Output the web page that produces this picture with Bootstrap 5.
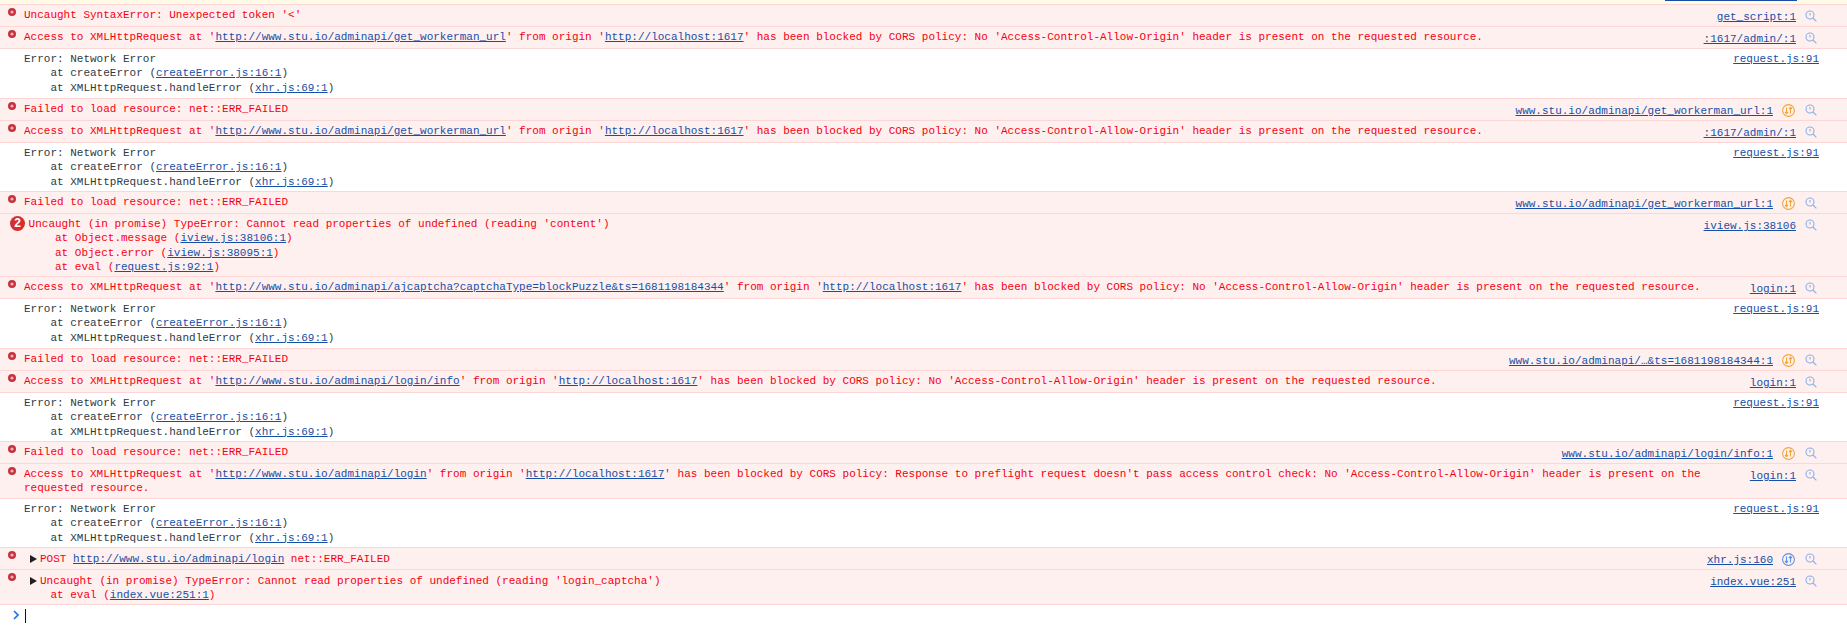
<!DOCTYPE html>
<html lang="en"><head><meta charset="utf-8"><title>Console</title>
<link rel="stylesheet" href="https://cdn.jsdelivr.net/npm/bootstrap@5.3.0/dist/css/bootstrap.min.css">
<style>
body{background:#fff;font:11px/14.33px "Liberation Mono",monospace;overflow:hidden;color:#303942;height:642px}
a{color:#174ea6;text-decoration:underline}
.top-strip{height:5px;background:#fffbe6;border-bottom:1px solid #fdd5d5;overflow:hidden;padding-right:50px}
.top-strip a{display:block;width:132px;height:1px;background:#174ea6}
.con-row{border-bottom:1px solid #fdd5d5;padding:3px 0 0 24px;position:relative;color:#303942}
.is-err{background:#fff0f0;color:#f5000f}
.is-err .src{padding-right:51px}
.is-err .src a{margin-top:2px}
.h1l{height:22px}.h2l{height:35px}.h3l{height:50px}.h3s{height:49px}.h4l{height:63px}
.msg{min-width:0}
.msg-shift{margin-top:1px}
.msg-line{white-space:pre}
.pad-group{padding-left:28.6px}
.src{white-space:nowrap;padding-right:28px;margin-left:25px}
.ico{position:absolute;right:30px;top:5px}
.net{position:absolute;right:52px;top:5px}
.err-dot{position:absolute;left:8px;top:3px}
.group-n{position:absolute;left:10px;top:2px;width:15px;height:15px;border-radius:50%;background:#d32f2f;color:#fff;font:bold 12px/15px "Liberation Sans",sans-serif;text-align:center}
.with-net{padding-right:74px!important}
.tri{display:inline-block;width:0;height:0;border-left:7px solid #202124;border-top:4.5px solid transparent;border-bottom:4.5px solid transparent;margin:0 3px 0 6px;vertical-align:-1px}
.prompt{height:30px;padding:4px 0 0 12px;gap:5px}
.prompt svg{margin-top:1px}
.caret-line{width:1px;height:14px;background:#111}
</style></head><body>
<div class="top-strip d-flex justify-content-end"><a href="#"></a></div>
<div id="log"></div>
<div class="prompt d-flex align-items-start"><svg width="8" height="10" viewBox="0 0 8 10"><path d="M2 1l4 4-4 4" fill="none" stroke="#1a73e8" stroke-width="1.7"/></svg><span class="caret-line"></span></div>
<script>
var u='http://www.stu.io/adminapi/';
function L(h){return '<a href="#">'+h+'</a>'}
var cors=function(a,c){return "Access to XMLHttpRequest at '"+L(a)+"' from origin '"+L('http://localhost:1617')+"' has been blocked by CORS policy: "+(c||"No 'Access-Control-Allow-Origin' header is present on the requested resource.")};
var net="Error: Network Error\n    at createError ("+L('createError.js:16:1')+")\n    at XMLHttpRequest.handleError ("+L('xhr.js:69:1')+")";
var fail="Failed to load resource: net::ERR_FAILED";
var rows=[
['e',"Uncaught SyntaxError: Unexpected token '&lt;'",'get_script:1',0,'h1l'],
['e',cors(u+'get_workerman_url'),':1617/admin/:1',0,'h1l'],
['w',net,'request.js:91',0,'h3l'],
['e',fail,'www.stu.io/adminapi/get_workerman_url:1','o','h1l'],
['e',cors(u+'get_workerman_url'),':1617/admin/:1',0,'h1l'],
['w',net,'request.js:91',0,'h3s'],
['e',fail,'www.stu.io/adminapi/get_workerman_url:1','o','h1l'],
['g',"Uncaught (in promise) TypeError: Cannot read properties of undefined (reading 'content')\n    at Object.message ("+L('iview.js:38106:1')+")\n    at Object.error ("+L('iview.js:38095:1')+")\n    at eval ("+L('request.js:92:1')+")",'iview.js:38106',0,'h4l'],
['e',cors(u+'ajcaptcha?captchaType=blockPuzzle&amp;ts=1681198184344'),'login:1',0,'h1l'],
['w',net,'request.js:91',0,'h3l'],
['e',fail,'www.stu.io/adminapi/…&amp;ts=1681198184344:1','o','h1l'],
['e',cors(u+'login/info'),'login:1',0,'h1l'],
['w',net,'request.js:91',0,'h3s'],
['e',fail,'www.stu.io/adminapi/login/info:1','o','h1l'],
['e',cors(u+'login',"Response to preflight request doesn't pass access control check: No 'Access-Control-Allow-Origin' header is present on the\nrequested resource."),'login:1',0,'h2l'],
['w',net,'request.js:91',0,'h3s'],
['t',"POST "+L(u+'login')+" net::ERR_FAILED",'xhr.js:160','b','h1l'],
['t',"Uncaught (in promise) TypeError: Cannot read properties of undefined (reading 'login_captcha')\n    at eval ("+L('index.vue:251:1')+")",'index.vue:251',0,'h2l']
];
var dot='<svg class="err-dot" width="8" height="8" viewBox="0 0 8 8"><circle cx="4" cy="4" r="4" fill="#c5323e"/><circle cx="4" cy="4" r="1.6" fill="#eeb4b4"/></svg>';
var mag='<svg class="ico" width="12" height="12" viewBox="0 0 12 12" fill="none" stroke="#8ab0e8" stroke-width="1.1"><circle cx="5" cy="5" r="4"/><path d="M5 3v2.6M8 8l3.4 3.4"/></svg>';
function N(c){return '<svg class="net" width="13" height="13" viewBox="0 0 13 13" fill="none" stroke="'+c+'" stroke-width="1.1"><circle cx="6.5" cy="6.5" r="5.9"/><path d="M4.5 3.5v6M3 8l1.5 1.6L6 8M8.5 9.5v-6M7 5l1.5-1.6L10 5"/></svg>'}
document.getElementById('log').innerHTML=rows.map(function(r){
 var t=r[0],cls='con-row d-flex justify-content-between '+r[4]+(t=='w'?'':' is-err')+(t=='g'?' pad-group':'');
 var left=t=='w'?'':(t=='g'?'<span class="group-n">2</span>':dot);
 var tri=t=='t'?'<span class="tri"></span>':'';
 var lines=r[1].split('\n').map(function(s,i){return '<div class="msg-line">'+(i==0?tri:'')+s+'</div>'}).join('');
 return '<div class="'+cls+'">'+left+'<div class="msg flex-grow-1'+(t=='t'?' msg-shift':'')+'">'+lines+'</div><div class="src flex-shrink-0'+(r[3]?' with-net':'')+'">'+L(r[2]).replace('<a ','<a class="d-block" ')+'</div>'+(r[3]=='o'?N('#f0a63b'):r[3]=='b'?N('#5a94e6'):'')+(t=='w'?'':mag)+'</div>';
}).join('');
</script>
<script src="https://cdn.jsdelivr.net/npm/bootstrap@5.3.0/dist/js/bootstrap.bundle.min.js"></script>
</body></html>
